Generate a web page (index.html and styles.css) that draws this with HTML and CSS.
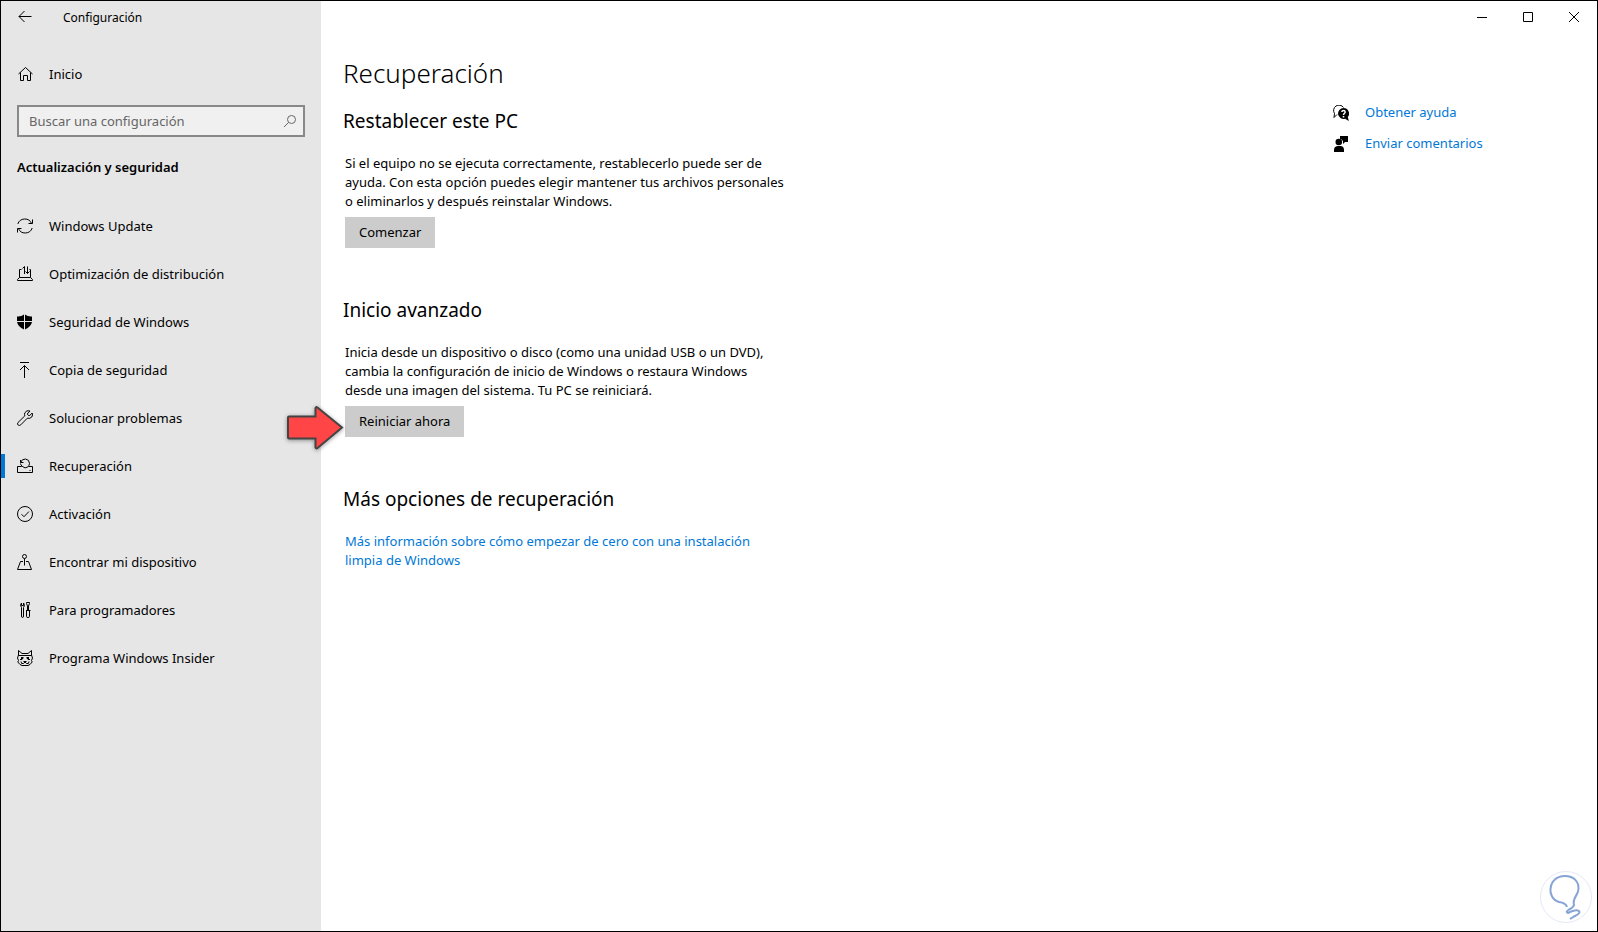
FILE: index.html
```html
<!DOCTYPE html>
<html lang="es">
<head>
<meta charset="utf-8">
<title>Configuración</title>
<link rel="stylesheet" href="styles.css">
</head>
<body>
<div class="window">
  <aside class="sidebar">
    <header class="titlebar">
      <button class="back" type="button" aria-label="Atrás">
        <svg class="icon" viewBox="0 0 16 16"><path d="M14.500 7.500H2M7.500 2L2 7.500L7.500 13"/></svg>
      </button>
      <span class="app-name">Configuración</span>
    </header>
    <a class="nav-item home" href="#">
      <svg class="icon" viewBox="0 0 16 16"><path d="M1.500 8L8.500 1.500L15.500 8M3.500 6.500V14.500H6.500V9.500H10.500V14.500H13.500V6.500"/></svg>
      <span>Inicio</span>
    </a>
    <label class="search">
      <input type="text" placeholder="Buscar una configuración" aria-label="Buscar una configuración">
      <svg class="icon" viewBox="0 0 16 16"><circle cx="9.500" cy="6.500" r="4"/><path d="M6.500 9.500L2 14"/></svg>
    </label>
    <h2 class="group">Actualización y seguridad</h2>
    <nav class="nav">
      <a class="nav-item" href="#">
        <svg class="icon" viewBox="0 0 16 16"><path d="M.8 6A7.400 7.400 0 0 1 14.600 5.500M15.500 1.500V5.500H11.500M15.200 10A7.400 7.400 0 0 1 1.400 10.500M.5 14.500V10.500H4.500"/></svg>
        <span>Windows Update</span></a>
      <a class="nav-item" href="#">
        <svg class="icon" viewBox="0 0 16 16"><path d="M4.500 3.500H2.500V11.500L.5 13.500V14.500H15.500V13.500L13.500 11.500V3.500H12.500M2.500 11.500H13.500M7.500 8V.5M5.500 2.500L7.500 .5M10.500 .5V7.500M8.500 5.500L10.500 7.500L12.500 5.500"/></svg>
        <span>Optimización de distribución</span></a>
      <a class="nav-item" href="#">
        <svg class="icon" viewBox="0 0 16 16"><path class="solid" d="M0 2.500Q4 3 7 .5V7H0ZM8 .5Q11 3 15 2.500V7H8ZM0 8H7V15.500Q1 13 0 8ZM8 8H15Q14 13 8 15.500Z"/></svg>
        <span>Seguridad de Windows</span></a>
      <a class="nav-item" href="#">
        <svg class="icon" viewBox="0 0 16 16"><path d="M3 .5H12M7.500 16V3.500M3 8L7.500 3.500L12 8"/></svg>
        <span>Copia de seguridad</span></a>
      <a class="nav-item" href="#">
        <svg class="icon" viewBox="0 0 16 16"><path d="M13 1Q9.500-.3 7.800 2.800Q7.300 4.300 7.800 5.900L1 12.500Q-.2 14 1.200 15.100Q2.500 16 3.800 14.800L10.300 8.200Q13 9 14.800 7Q16 5 15.200 3L12.200 6L10.200 4Z"/></svg>
        <span>Solucionar problemas</span></a>
      <a class="nav-item active" href="#" aria-current="page">
        <svg class="icon" viewBox="0 0 16 16"><path d="M4.500 8.500H.5V14.500H15.500V8.500H11.500M4.500 8.500H5.500Q3.500 7 3.500 5.500M3.500 2V4.500H6.500M3.700 4.300Q5 .8 8.500 1Q12.500 1.500 12.500 5.500Q12.300 7.500 10.800 9Q8 11 5.500 8.500M12.500 12.500H13.500"/></svg>
        <span>Recuperación</span></a>
      <a class="nav-item" href="#">
        <svg class="icon" viewBox="0 0 16 16"><circle cx="8" cy="8" r="7.500"/><path d="M4.500 8.200L7 10.700L12 5.500"/></svg>
        <span>Activación</span></a>
      <a class="nav-item" href="#">
        <svg class="icon" viewBox="0 0 16 16"><circle cx="7.500" cy="2.500" r="2"/><path d="M7.500 4.500V11.500M6 7.500H3.500L.5 15.500H14.500L11.500 7.500H9"/></svg>
        <span>Encontrar mi dispositivo</span></a>
      <a class="nav-item" href="#">
        <svg class="icon" viewBox="0 0 16 16"><path d="M4.500 5.500V14Q4.500 15.500 5.500 15.500T6.500 14V5.500Q8 4 7 1.800L6.500 1V3.500H4.500V1Q2.500 3 4.500 5.500ZM9.500 1.500V.5H12.500V1.500L11.500 4V8.500M10.500 8.500V4L9.500 1.500M9 8.500H13.500M9.500 9V14.500Q9.500 15.500 11 15.500T12.500 14.500V9"/></svg>
        <span>Para programadores</span></a>
      <a class="nav-item" href="#">
        <svg class="icon" viewBox="0 0 16 16"><path d="M1.500 5V.5L5 3.500H11L14.500 .5V5M1.500 5L.5 8L1.500 10.500L.8 12L3 14.500L5 15.500H11L13 14.500L15.200 12L14.500 10.500L15.500 8L14.500 5M1.500 5.500H14.500M3 9.500H5L6.500 7.500M13 9.500H11L9.500 7.500M4 11.500Q4 14.500 6.500 13.500L8 12L9.500 13.500Q12 14.500 12 11.500M6.500 11.500H9.500"/><path class="solid" d="M4 7H6V9H4ZM10 7H12V9H10ZM6.500 11H9.500L8 13Z"/></svg>
        <span>Programa Windows Insider</span></a>
    </nav>
  </aside>

  <div class="page">
    <div class="controls">
      <button type="button" aria-label="Minimizar"><svg viewBox="0 0 10 10"><path d="M0 5.500H10"/></svg></button>
      <button type="button" aria-label="Maximizar"><svg viewBox="0 0 10 10"><path d="M.5 .5H9.500V9.500H.5Z"/></svg></button>
      <button type="button" aria-label="Cerrar"><svg viewBox="0 0 10 10"><path d="M0 0L10 10M10 0L0 10"/></svg></button>
    </div>
    <div class="content">
      <main class="main">
        <h1>Recuperación</h1>
        <section>
          <h2>Restablecer este PC</h2>
          <div class="body">
            <p>Si el equipo no se ejecuta correctamente, restablecerlo puede ser de<br>ayuda. Con esta opción puedes elegir mantener tus archivos personales<br>o eliminarlos y después reinstalar Windows.</p>
            <div class="action"><button class="btn" type="button">Comenzar</button></div>
          </div>
        </section>
        <section>
          <h2>Inicio avanzado</h2>
          <div class="body">
            <p>Inicia desde un dispositivo o disco (como una unidad USB o un DVD),<br>cambia la configuración de inicio de Windows o restaura Windows<br>desde una imagen del sistema. Tu PC se reiniciará.</p>
            <div class="action">
              <button class="btn" type="button">Reiniciar ahora</button>
              <svg class="arrow" viewBox="0 0 58 44"><path d="M2 11.500Q2 10.500 3 10.500H29.500V2Q30 .5 31.500 1.500L56 21.500L31.500 42Q30 43 29.500 41.500V32.500H3Q2 32.500 2 31.500Z"/></svg>
            </div>
          </div>
        </section>
        <section>
          <h2>Más opciones de recuperación</h2>
          <div class="body">
            <a class="link" href="#">Más información sobre cómo empezar de cero con una instalación<br>limpia de Windows</a>
          </div>
        </section>
      </main>
      <aside class="help">
        <a class="link" href="#">
          <svg class="icon" viewBox="0 0 16 16"><path d="M4 9.500L1 12.500L1.500 8.500A5 5 0 1 1 10.500 2.500"/><path class="solid" d="M10.500 3A5.500 5.500 0 1 0 12 13.800L15.800 16L14.800 12A5.500 5.500 0 0 0 10.500 3Z"/><path class="mark" d="M8.800 7Q9 5.500 10.500 5.500T12.200 7Q12.200 7.800 11.300 8.500T10.500 10M10.500 11V12.500"/></svg>
          <span>Obtener ayuda</span></a>
        <a class="link" href="#">
          <svg class="icon" viewBox="0 0 16 16"><path class="solid" d="M1 16V14Q1 10.500 4.500 10H8Q11 10.500 11 14V16ZM7 0H15V6H12L10 8V5L8 3H7Z"/><circle class="solid" cx="5.800" cy="6" r="3.300"/></svg>
          <span>Enviar comentarios</span></a>
      </aside>
    </div>
  </div>
  <svg class="watermark" viewBox="0 0 52 52"><circle cx="26" cy="26" r="25.500"/><path d="M27 36Q26 32 19 31C12 29 10 22 10.500 18C11 10 17 5 25 5C34 5 39 11 38.500 18C38 25 32 27 34 34Q33 37 29 38.500Q25 41 28 42Q36 38 39 40Q41 42 35 45L30 48"/></svg>
</div>
</body>
</html>
```
FILE: styles.css
```css
* { box-sizing: border-box; }
body {
  margin: 0;
  font: 13px/19px "Noto Sans", "Open Sans", sans-serif;
  color: #000;
  background: #fff;
}
h1, h2, p { margin: 0; font-weight: 400; }
a { color: inherit; text-decoration: none; }
button { font: inherit; color: inherit; border: 0; padding: 0; background: none; }
svg { fill: none; stroke: #000; stroke-width: 1; display: block; flex: none; }
.icon { width: 16px; height: 16px; }
.solid { fill: #000; stroke: none; }
.mark { stroke: #fff; stroke-width: 1.500; }

.window {
  position: relative;
  display: grid;
  grid-template-columns: 320px 1fr;
  min-height: 100vh;
  border: 1px solid #000;
}
.sidebar { background: #e6e6e6; }
.titlebar { display: flex; align-items: center; height: 32px; padding-left: 16px; gap: 30px; }
.app-name { font-size: 12px; }

.nav-item { display: flex; align-items: center; height: 48px; padding-left: 16px; gap: 16px; }
.home { height: 32px; margin-top: 25px; }
.search {
  display: flex;
  align-items: center;
  height: 32px;
  margin: 15px 16px 0 16px;
  padding: 0 5px 0 10px;
  border: 2px solid #888;
  background: #f0f0f0;
}
.search input { flex: 1; min-width: 0; padding: 0; border: 0; outline: 0; background: none; font: inherit; }
.search input::placeholder { color: #666; opacity: 1; }
.search .icon { stroke: #666; }
.group { margin: 21px 0 25px 16px; font-size: 13px; font-weight: 600; }
.active { background: linear-gradient(#0078d7, #0078d7) left center / 4px 24px no-repeat; }

.page { display: flex; flex-direction: column; }
.controls { display: flex; justify-content: flex-end; height: 32px; }
.controls button { width: 46px; display: flex; align-items: center; justify-content: center; }
.controls svg { width: 10px; height: 10px; }

.content { display: flex; justify-content: space-between; padding-left: 22px; }
.main { padding-top: 22px; }
h1 { font-size: 26px; line-height: 36px; font-weight: 300; }
section { height: 189px; padding-top: 16px; }
section h2 { font-size: 19px; line-height: 28px; }
.body { padding: 19px 0 0 2px; }
.action { position: relative; margin-top: 6px; }
.btn { height: 31px; padding: 0 14px; background: #ccc; }
.link { color: #0078d7; }
.arrow { position: absolute; left: -59px; top: 0; width: 58px; height: 44px; filter: drop-shadow(0 1px 2px #0006); }
.arrow path { fill: #ff4545; stroke: #444; stroke-width: 2; }

.help { width: 264px; padding-top: 70px; display: flex; flex-direction: column; gap: 12px; }
.help .link { display: flex; align-items: center; gap: 16px; }

.watermark { position: absolute; right: 5px; bottom: 8px; width: 52px; height: 52px; }
.watermark circle { stroke: #e4e9f5; }
.watermark path { stroke: #86a4d6; stroke-width: 2; }
```
